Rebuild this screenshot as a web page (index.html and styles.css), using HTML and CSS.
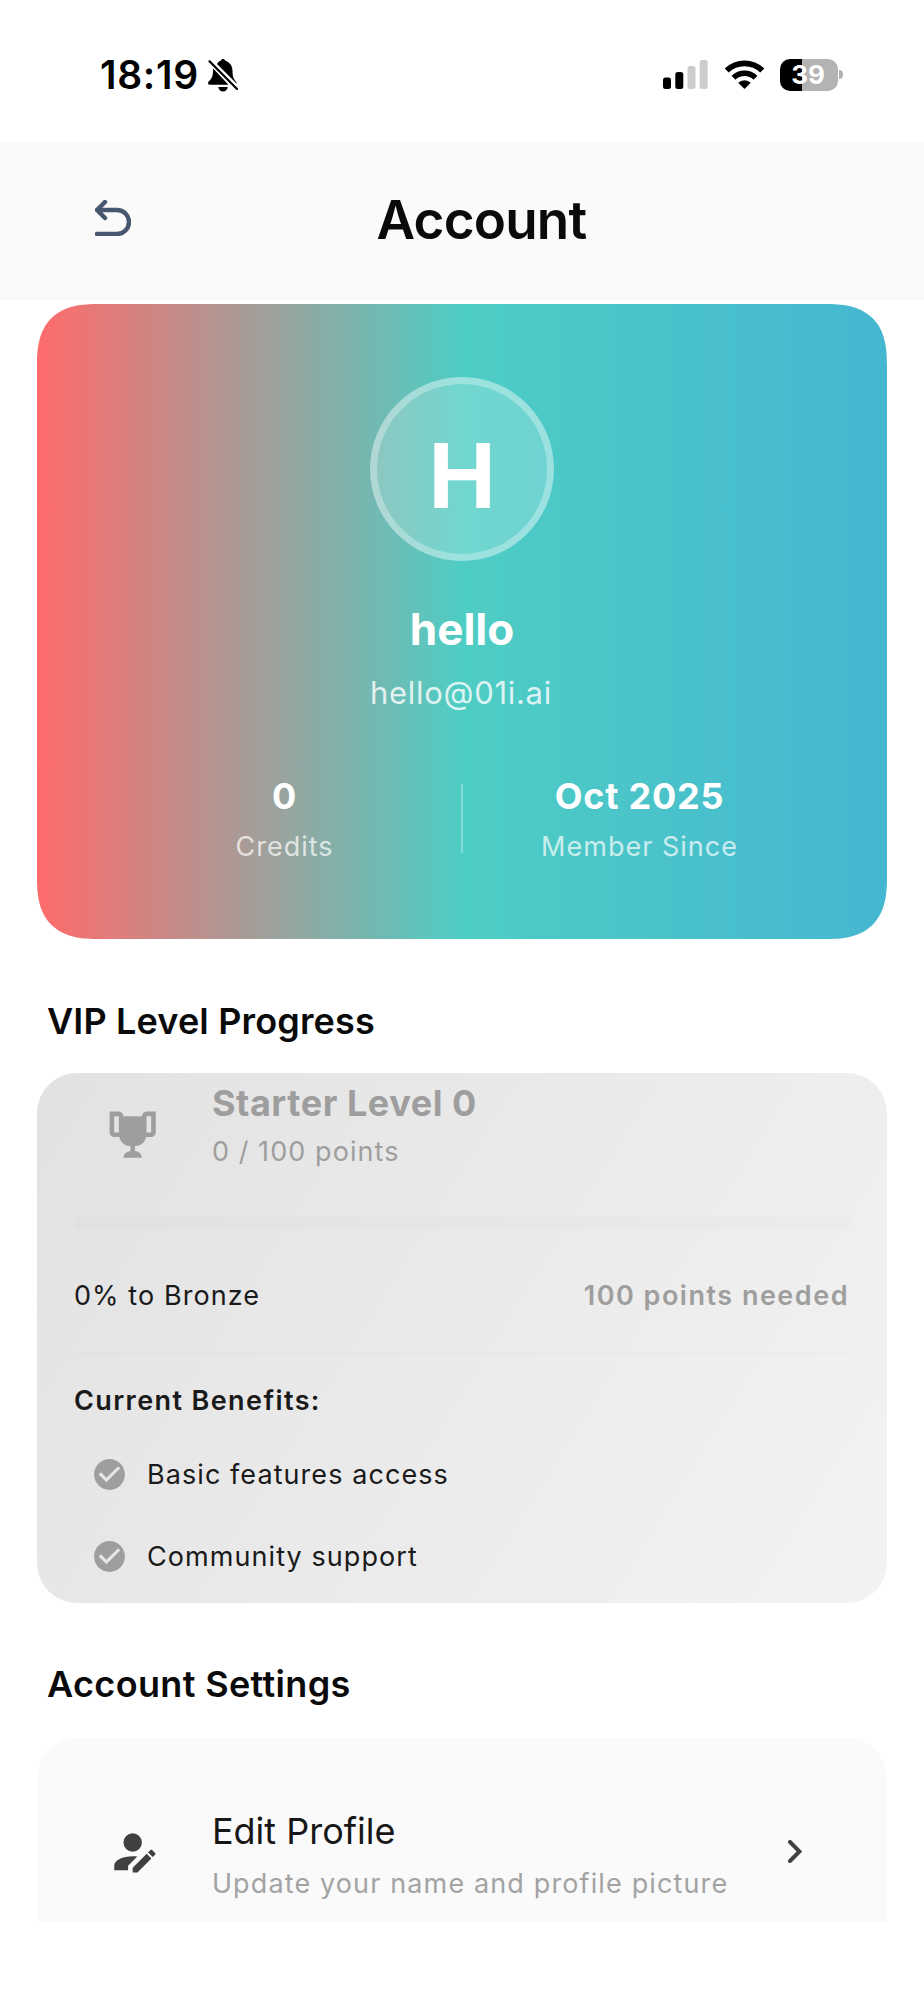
FILE: index.html
```html
<!DOCTYPE html>
<html lang="en">
  <head>
    <meta charset="UTF-8">
    <title>Account</title>
    <link rel="stylesheet" href="styles.css">
  </head>
  <body>
    <div class="statusbar">
      <div class="status-left">
        <span class="clock">18:19</span>
        <svg class="bell" viewBox="0 0 30 33">
          <path d="M9 5 C10 3 11.500 2 12.800 1.700 C13 .6 14 0 15 0 C16 0 17 .6 17.300 1.700 C21.500 3 24.500 6.500 24.500 12 C24.500 18 25.500 19.500 28.500 23.500 L29 25 Z"/>
          <path d="M5.200 9.500 L20.500 25.700 L2 25.700 C.6 25.700 0 24.800 0 24 C0 22 4.600 20.500 4.900 14 Z"/>
          <path d="M10.300 28 L19.700 28 C19.500 30.500 17.500 32.500 15 32.500 C12.500 32.500 10.500 30.500 10.300 28 Z"/>
          <path d="M1.500 2.300 L29 30" stroke="#000" stroke-width="2.200" stroke-linecap="round"/>
        </svg>
      </div>
      <div class="status-right">
        <svg class="signal" viewBox="0 0 45 29">
          <rect x="0" y="17.500" width="8" height="11.500" rx="2.500"/>
          <rect x="12.300" y="12" width="8" height="17" rx="2.500"/>
          <rect x="24.500" y="6" width="8" height="23" rx="2.500" fill="#ccc"/>
          <rect x="36.700" y="0" width="8" height="29" rx="2.500" fill="#ccc"/>
        </svg>
        <svg class="wifi" viewBox="0 0 39 29">
          <g fill="none" stroke="#000" stroke-width="5.600">
            <path d="M1.800 10.500 A25.500 25.500 0 0 1 37.200 10.500"/>
            <path d="M8.500 17.700 A16 16 0 0 1 30.500 17.700"/>
          </g>
          <path d="M19.500 29 L13.200 22.700 A9 9 0 0 1 25.800 22.700 Z"/>
        </svg>
        <div class="battery"><span>39</span></div>
        <div class="nub"></div>
      </div>
    </div>

    <div class="header">
      <svg class="back" viewBox="0 0 36 36">
        <path d="M10 2 L2 10 L10 18 M2 10 H22 A12 12 0 0 1 22 34 H2"/>
      </svg>
      <h1 class="title">Account</h1>
    </div>

    <div class="content">
      <div class="profile">
        <div class="avatar">H</div>
        <div class="name">hello</div>
        <div class="email">hello@01i.ai</div>
        <div class="stats">
          <div class="stat">
            <div class="stat-value">0</div>
            <div class="stat-label">Credits</div>
          </div>
          <div class="stat-line"></div>
          <div class="stat">
            <div class="stat-value">Oct 2025</div>
            <div class="stat-label">Member Since</div>
          </div>
        </div>
      </div>

      <h2 class="section">VIP Level Progress</h2>
      <div class="vip">
        <div class="level">
          <svg class="icon" viewBox="0 0 24 24">
            <path d="M18 2C17.100 2 16 3 16 4H8C8 3 6.900 2 6 2H2V11C2 12 3 13 4 13H6.200C6.600 15 7.900 16.700 11 17V19.080C8 19.540 8 22 8 22H16C16 22 16 19.540 13 19.080V17C16.100 16.700 17.400 15 17.800 13H20C21 13 22 12 22 11V2H18M6 11H4V4H6V11M20 11H18V4H20V11Z"/>
          </svg>
          <div>
            <div class="level-name">Starter Level 0</div>
            <div class="level-points">0 / 100 points</div>
          </div>
        </div>
        <div class="bar"></div>
        <div class="progress-row">
          <span>0% to Bronze</span>
          <span class="needed">100 points needed</span>
        </div>
        <div class="line"></div>
        <div class="benefits-title">Current Benefits:</div>
        <div class="benefit">
          <svg class="check" viewBox="0 0 24 24"><path d="M12 2C6.500 2 2 6.500 2 12S6.500 22 12 22 22 17.500 22 12 17.500 2 12 2M10 17L5 12L6.410 10.590L10 14.170L17.590 6.580L19 8L10 17Z"/></svg>
          <span>Basic features access</span>
        </div>
        <div class="benefit">
          <svg class="check" viewBox="0 0 24 24"><path d="M12 2C6.500 2 2 6.500 2 12S6.500 22 12 22 22 17.500 22 12 17.500 2 12 2M10 17L5 12L6.410 10.590L10 14.170L17.590 6.580L19 8L10 17Z"/></svg>
          <span>Community support</span>
        </div>
      </div>

      <h2 class="section settings-title">Account Settings</h2>
      <div class="settings">
        <svg class="icon edit" viewBox="0 0 24 24">
          <path d="M21.700 13.350L20.700 14.350L18.650 12.300L19.650 11.300C19.860 11.090 20.210 11.090 20.420 11.300L21.700 12.580C21.910 12.790 21.910 13.140 21.700 13.350M12 18.940L18.060 12.880L20.110 14.930L14.060 21H12V18.940M12 14C7.580 14 4 15.790 4 18V20H10V18.110L14 14.110C13.340 14.030 12.670 14 12 14M12 4A4 4 0 1 0 12 12A4 4 0 1 0 12 4Z"/>
        </svg>
        <div class="setting-text">
          <div class="setting-name">Edit Profile</div>
          <div class="setting-desc">Update your name and profile picture</div>
        </div>
        <svg class="chevron" viewBox="0 0 14 23"><path d="M2 2 L11.500 11.500 L2 21"/></svg>
      </div>
    </div>
  </body>
</html>
```
FILE: styles.css
```css
*{
  box-sizing: border-box;
}
body{
  margin: 0;
  height: 2000px;
  overflow: hidden;
  background-color: white;
  font-family: Inter, "Liberation Sans", sans-serif;
}
svg{
  display: block;
  flex-shrink: 0;
}

/* status bar */
.statusbar{
  height: 142px;
  display: flex;
  justify-content: space-between;
  padding: 51px 81px 0 100px;
}
.status-left{
  display: flex;
  height: 48px;
}
.clock{
  width: 108px;
  font-size: 39px;
  font-weight: 600;
  line-height: 48px;
  letter-spacing: .7px;
}
.bell{
  width: 30px;
  height: 33px;
  margin-top: 8px;
}
.status-right{
  display: flex;
  align-items: center;
  height: 47px;
}
.signal{
  width: 45px;
  height: 29px;
  margin-right: 17px;
}
.wifi{
  width: 39px;
  height: 29px;
  margin-right: 16px;
}
.battery{
  width: 58px;
  height: 32px;
  padding-right: 2px;
  border-radius: 10px;
  background: linear-gradient(90deg, black 38%, #b3b3b3 38%);
  color: white;
  font-size: 26px;
  font-weight: 700;
  line-height: 32px;
  text-align: center;
}
.nub{
  width: 4px;
  height: 9px;
  margin-left: 1px;
  border-radius: 0 4px 4px 0;
  background-color: #b3b3b3;
}

/* header */
.header{
  height: 158px;
  padding: 58px 95px 0;
  display: grid;
  grid-template-columns: 36px 1fr 0;
  background-color: #fafafa;
  border-bottom: 2px solid #f7f7f7;
}
.back{
  width: 36px;
  height: 36px;
  fill: none;
  stroke: #475770;
  stroke-width: 4.5;
  stroke-linecap: round;
  stroke-linejoin: round;
}
.title{
  margin: -12px 0 0;
  padding-left: 3px;
  font-size: 53px;
  font-weight: 600;
  line-height: 64px;
  letter-spacing: -.8px;
  text-align: center;
  color: #0a0a0a;
}

.content{
  padding: 4px 37px 0;
}

/* profile card */
.profile{
  height: 635px;
  padding-top: 73px;
  border-radius: 48px;
  background: linear-gradient(90deg, #ff6b6b, #4ecdc4 50%, #45b7d1);
  color: white;
  text-align: center;
}
@supports (corner-shape: squircle){
  .profile{
    border-radius: 62px;
    corner-shape: superellipse(1.4);
  }
}
.avatar{
  width: 184px;
  height: 184px;
  margin: 0 auto;
  border: 7px solid rgba(255,255,255,.3);
  border-radius: 50%;
  background-color: rgba(255,255,255,.2);
  font-size: 90px;
  font-weight: 700;
  line-height: 184px;
}
.name{
  margin-top: 43px;
  font-size: 44px;
  font-weight: 700;
  line-height: 50px;
}
.email{
  margin-top: 19px;
  padding-right: 2px;
  font-size: 31px;
  line-height: 40px;
  letter-spacing: .7px;
  opacity: .8;
}
.stats{
  display: flex;
  margin: 53px 71px 0;
}
.stat{
  flex: 1;
}
.stat-line{
  width: 2px;
  height: 69px;
  margin-top: 18px;
  background-color: rgba(255,255,255,.3);
}
.stat-value{
  font-size: 36px;
  font-weight: 700;
  line-height: 61px;
  letter-spacing: .8px;
}
.stat-label{
  font-size: 27px;
  line-height: 40px;
  letter-spacing: 1px;
  opacity: .7;
}

.section{
  margin: 56px 0 0 10px;
  font-size: 36px;
  font-weight: 600;
  line-height: 50px;
  letter-spacing: .15px;
  color: #0a0a0a;
}

/* vip card */
.vip{
  height: 530px;
  margin-top: 27px;
  padding: 0 37px;
  border-radius: 40px;
  background: linear-gradient(122deg, #e2e2e2, #f3f3f3);
  color: #1a1a1a;
  font-size: 27px;
  letter-spacing: 1.07px;
}
.level{
  display: flex;
  height: 143px;
  padding: 7px 0 0 31px;
  color: #9e9e9e;
}
.icon{
  width: 55.4px;
  height: 55.4px;
  margin: 27px 51.5px 0 0;
  fill: #9e9e9e;
}
.level-name{
  font-size: 36px;
  font-weight: 700;
  line-height: 46px;
  letter-spacing: .55px;
}
.level-points{
  margin-top: 6px;
  line-height: 40px;
}
.bar{
  height: 14px;
  border-radius: 5px;
  background-color: rgba(0,0,0,.012);
}
.progress-row{
  display: flex;
  justify-content: space-between;
  margin-top: 46px;
  padding-right: 1px;
  line-height: 40px;
}
.needed{
  font-weight: 600;
  letter-spacing: 1.5px;
  color: #9e9e9e;
}
.line{
  height: 2px;
  margin-top: 36px;
  background-color: rgba(0,0,0,.012);
}
.benefits-title{
  margin-top: 27px;
  font-weight: 600;
  line-height: 40px;
  letter-spacing: 1.4px;
}
.benefit{
  display: flex;
  align-items: center;
  height: 82.5px;
  padding-left: 17px;
}
.benefits-title + .benefit{
  margin-top: 12px;
}
.check{
  width: 37px;
  height: 37px;
  margin-right: 19px;
  fill: #9e9e9e;
}

.profile + .section{
  margin-top: 57px;
}

/* settings card, cut by the bottom bar */
.settings-title{
  margin-top: 56px;
  letter-spacing: .35px;
}
.settings{
  display: flex;
  height: 184px;
  margin-top: 29px;
  padding-left: 68px;
  border-radius: 40px 40px 0 0;
  background-color: #fafafa;
}
.edit{
  margin-top: 86px;
  fill: #404040;
}
.setting-text{
  width: 576.5px;
  padding-top: 70px;
  white-space: nowrap;
}
.setting-name{
  font-size: 36px;
  line-height: 46px;
  color: #171717;
}
.setting-desc{
  margin-top: 10px;
  font-size: 27px;
  line-height: 40px;
  letter-spacing: 1.13px;
  color: #a3a3a3;
}
.chevron{
  width: 14px;
  height: 23px;
  margin-top: 102px;
  fill: none;
  stroke: #404040;
  stroke-width: 4;
  stroke-linecap: round;
}
```
